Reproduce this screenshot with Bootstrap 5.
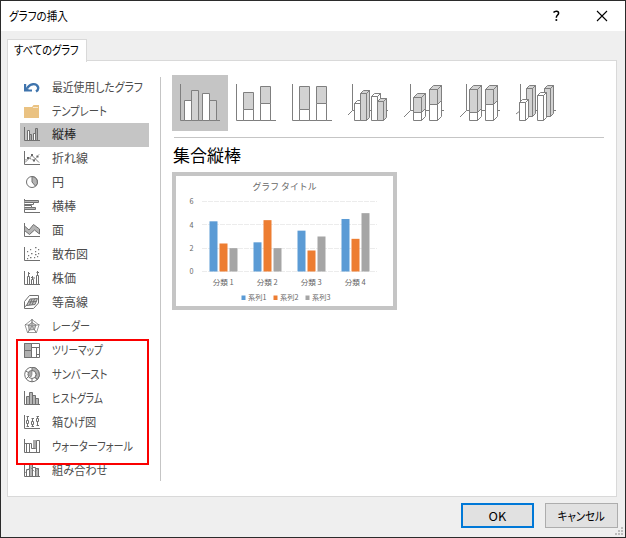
<!DOCTYPE html>
<html lang="ja">
<head>
<meta charset="utf-8">
<meta name="viewport" content="width=device-width, initial-scale=1">
<title>グラフの挿入</title>
<link rel="stylesheet" href="https://cdn.jsdelivr.net/npm/bootstrap@5.3.0/dist/css/bootstrap.min.css">
<style>
body{font-family:"Noto Sans CJK JP",sans-serif;font-size:12px;line-height:16px;color:#000;overflow:hidden}
.dialog{width:626px;height:538px;border:1px solid #2b2b2b;background:#efefef}
.titlebar{height:30px;padding:0 17px 0 8px}
.fit{display:inline-block;white-space:nowrap;transform-origin:left center;font-feature-settings:"palt"}
.winbtns{gap:35px}
.tabs{height:30px;padding:8px 0 0 6px}
.tab-on{width:80px;height:23px;border:1px solid #d9d9d9;border-bottom:0;background:#fff;padding:2px 0 0 6px;margin-bottom:-1px;z-index:1}
.panel{margin:-1px 8px 0 6px;height:437px;border:1px solid #d9d9d9;background:#fff}
.side{width:152px;padding:15px 0 0 12px}
.side .list-group-item{height:24px;width:129px;padding:0 0 0 4px;border:0;border-radius:0;color:#4c4c4c;background:none;gap:12px}
.side .list-group-item.active{background:#c5c5c5;color:#222}
.side .list-group-item svg{flex:none;margin-top:0}
.side .list-group-item .fit{margin-top:-2px}
.rule-v{width:1px;height:404px;background:#c5c5c5;margin-top:16px}
.mainpane{padding:14px 0 0 11px}
.kind{width:56px;height:56px}
.kind.sel{background:#c5c5c5}
.rule-h{height:1px;width:430px;background:#c5c5c5;margin:6px 0 0 2px}
.heading{font-size:17px;line-height:24px;margin:5px 0 0 1px;height:29px}
.preview{width:225px;height:138px;border:4px solid #c5c5c5;background:#fff}
.preview text{font-family:"Noto Sans CJK JP",sans-serif;font-size:7px;fill:#666}
.footer-row{padding:6px 7px 0 0;gap:11px}
.dlg-btn{width:73px;height:25px;padding:0;border-radius:0;font-size:12px;line-height:16px;background:#e1e1e1;border:1px solid #adadad;color:#000}
.dlg-btn.primary{border:2px solid #0078d7}
.dlg-btn .fit{transform-origin:center}
.red-box{left:16px;top:339px;width:133px;height:126px;border:2px solid #fa0000;z-index:3}
.grip{left:615px;top:527px}
</style>
<script src="https://cdn.jsdelivr.net/npm/bootstrap@5.3.0/dist/js/bootstrap.bundle.min.js"></script>
</head>
<body class="m-0">
<div class="dialog position-relative">
  <div class="titlebar d-flex align-items-center justify-content-between bg-white">
    <span class="fit" data-w="59">グラフの挿入</span>
    <div class="d-flex winbtns align-items-center">
      <svg width="9" height="12" fill="none" stroke="#000" stroke-width="1.5"><path d="M1.5 2.6C3 .8 6.600 .9 6.600 3.200C6.600 5 4.300 5.200 4.300 7.800"/><path d="M3.500 10h1.700" stroke-width="1.8"/></svg>
      <svg width="12" height="12" stroke="#000" stroke-width="1.1"><path d="M1 1l10 10M11 1L1 11"/></svg>
    </div>
  </div>
  <div class="tabs d-flex"><div class="tab-on position-relative"><span class="fit" data-w="65">すべてのグラフ</span></div></div>
  <div class="panel d-flex">
    <div class="side"><div class="list-group" id="types"></div></div>
    <div class="rule-v"></div>
    <div class="mainpane">
      <div class="d-flex" id="kinds"></div>
      <div class="rule-h"></div>
      <div class="heading"><span class="fit" data-w="68">集合縦棒</span></div>
      <div class="preview"><svg class="d-block" id="chart" width="217" height="130"></svg></div>
    </div>
  </div>
  <div class="footer-row d-flex justify-content-end">
    <button class="btn dlg-btn primary"><span class="fit" data-w="18">OK</span></button>
    <button class="btn dlg-btn"><span class="fit" data-w="47">キャンセル</span></button>
  </div>
</div>
<div class="red-box position-absolute"></div>
<svg class="grip position-absolute" width="9" height="9" fill="#bdbdbd"><path d="M6 0h2v2h-2zM3 3h2v2h-2zM6 3h2v2h-2zM0 6h2v2h-2zM3 6h2v2h-2zM6 6h2v2h-2z"/></svg>
<script>
const axis='<path d="M.5 0V13.500H16"/>';
const types=[
 ['最近使用したグラフ',91,'<path stroke="#3f74ad" stroke-width="2.400" d="M3 8.500C6 3 12.500 3 14 7C14.700 9 13.500 10.500 12 11.500"/><path stroke="none" fill="#3f74ad" d="M0 4V11.500H8V9.500H4.800L2.200 7.500V4Z"/>'],
 ['テンプレート',55,'<g stroke="none"><path fill="#eac282" d="M0 3H8L9.500 1H15V14H0Z"/><path stroke="#f8e8cd" d="M9 3.500H14"/></g>'],
 ['縦棒',24,'<path d="M.5 0V13.500H16"/><path fill="#fff" d="M3.500 13V3.500H5.500V13M9.500 13V6.500H11.500V13"/><path fill="#aaa" d="M5.500 13V7.500H7.500V13M11.500 13V1.500H13.500V13"/>'],
 ['折れ線',36,axis+'<path d="M1 11.500L8 4.500L15 11.500" stroke-width=".9"/><path d="M1 9.500L4 6.500L10 9.500L15 3.500" stroke-dasharray="2 1"/><path fill="#666" stroke="none" d="M7 3h2v2H7zM3 6h2v2H3zM9 8.500h2v2H9zM12.500 4.500h2v2h-2z"/>'],
 ['円',12,'<circle cx="8" cy="7" r="5.500"/><path fill="#b5b5b5" d="M8 7V1.500A5.500 5.500 0 0 1 11.500 11.200Z"/>'],
 ['横棒',24,axis+'<path fill="#b5b5b5" d="M.5 1.500H14.500V3.500H.5M.5 8.500H11.500V10.500H.5"/><path fill="#fff" d="M.5 3.500H9.500V5.500H.5M.5 6.500H7.500V8.500H.5"/>'],
 ['面',12,axis+'<path fill="#b5b5b5" d="M.5 3L5 7L9.500 1.500L15.500 6V11L10.500 7L5.500 11.500L.5 7.500Z"/>'],
 ['散布図',36,axis+'<path stroke="none" fill="#777" d="M3 4h1.200v1.200H3zM6 2h1.200v1.200H6zM11 0h1.500v1.200h-1.500zM14 2h1.200v1.200H14zM11 4h1.200v1.200H11zM7 6h1.500v1.200H7zM4 8h1.200v1.200H4zM11 7h1.500v1.200h-1.500zM14 6h1.200v1.200H14zM6 10h1.500v1.200H6zM10 10h1.200v1.200H10zM3 11h1.200v1.200H3zM13 9h1.200v1.200H13z"/>'],
 ['株価',24,'<path d="M.5 0V13.500H16M3.500 13V5.500H5.500V13M7.500 13V8.500H9.500V13M12.500 13V4.500H14.500V13M4.500 1V5M4 2.500H6M8.500 5V8M7 6.500H8.500M8.500 7H11M13.500 0V4M12.500 1.500H15"/>'],
 ['等高線',36,'<path d="M.5 6.500L5.500 .5H14.500V8L9.500 13.500H.5ZM.5 12L5.500 8"/><path fill="#c5c5c5" d="M2.500 10.500L6 4L13.500 3.500L11 9.500Z"/><path d="M4.500 7L12.500 6.500M8 10L10.500 4M5.500 10L8 4"/>'],
 ['レーダー',38,'<path d="M8 0V7L1 5.500M15.500 5.500L8 7M3.500 14L8 7L12.500 14M8 .5L15 6L12.500 13.500H3.500L1 6Z" stroke-width=".7"/><path fill="#c5c5c5" stroke-width=".7" d="M8 3.500L12 6L10.500 10.500L5 11L4.500 6Z"/><path d="M8 0V7L4 13M8 7L12 13M4 6L8 7L12 6" stroke-width=".6"/>'],
 ['ツリーマップ',51,'<path fill="#fff" d="M.5 .5H15.500V14.500H.5Z"/><path fill="#b0b0b0" d="M.5 .5H7.500V7.500H.5ZM.5 7.500H7.500V14.500H.5Z"/><path d="M7.500 4.500H15.500M12.500 4.500V14.500M12.500 11.500H15.500"/>'],
 ['サンバースト',56,'<circle cx="8" cy="7.500" r="7.300"/><path fill="#b0b0b0" d="M8 .3A7.300 7.300 0 0 1 13.500 12.500L11 10.300A4 4 0 0 0 8 3.500Z"/><circle cx="8" cy="7.500" r="4" fill="#fff"/><path fill="#aaa" d="M8 7.500V3.500A4 4 0 0 0 4 7.500L7 10Z" stroke-width=".6"/><path d="M4.500 5.500L1.500 4M4.500 9.500L2 12M8 11.500V15M11 10.500L13.500 13"/>'],
 ['ヒストグラム',51,axis+'<path fill="#b5b5b5" d="M2.500 13V5.500H5.500V13M5.500 13V1.500H8.500V13M8.500 13V4.500H11.500V13M11.500 13V7.500H14.500V13"/>'],
 ['箱ひげ図',44,axis+'<path d="M3.500 1V11.500M8.500 3V12M13.500 1V11M2.500 1.500H5M7.500 3.500H10M12.500 1.500H15M2.500 11.500H5M7.500 11.500H10M12.500 10.500H15"/><path fill="#fff" d="M2.500 5.500H4.500V8.500H2.500ZM7.500 6.500H9.500V9.500H7.500ZM12.500 3.500H14.500V6.500H12.500Z"/>'],
 ['ウォーターフォール',81,axis+'<path fill="#fff" d="M2.500 13V4.500H5.500V13M12.500 13V1.500H15.500V13"/><path stroke="none" fill="#a9a9a9" d="M9 1H12V10H9Z"/><path d="M5.500 4.500H7.500V9.500H11.500M.5 4.500H3"/>'],
 ['組み合わせ',55,axis+'<path fill="#b5b5b5" d="M5.500 13V.5H8.500V13M11.500 13V5.500H14.500V13"/><path fill="#fff" d="M2.500 13V6.500H5.500V13M8.500 13V4.500H11.500V13"/><path d="M1 10L6 4L11 9L15 5" stroke-width=".7" stroke-dasharray="2 1"/>']
];
document.getElementById('types').innerHTML=types.map((t,i)=>
 `<div class="list-group-item d-flex align-items-center${i===2?' active':''}"><svg width="16" height="16" fill="none" stroke="#707070">${t[2]}</svg><span class="fit" data-w="${t[1]}">${t[0]}</span></div>`).join('');

// Gallery of column chart kinds
const G='#d2d2d2',W='#fff';
const flat=(a,b,t,u,f)=>`<path fill="${f}" d="M${a} ${u}V${t}H${b}V${u}Z"/>`;
const box=(a,b,t,u,d,f)=>flat(a,b,t,u,f)+`<path fill="${f}" d="M${a} ${t}l${d} ${-d}H${b+d}l${-d} ${d}ZM${b} ${t}l${d} ${-d}V${u-d}L${b} ${u}Z"/>`;
const ax2='<path d="M8.500 9V45.500H48"/>';
const ax3=(x,y)=>`<path d="M${x} 9V35.500H48M${x} 35.500L8 ${y}"/>`;
const kinds=[
 ax2+flat(12.5,19.5,25.5,45.5,W)+flat(19.5,26.5,15.5,45.5,G)+flat(30.5,37.5,18.5,45.5,W)+flat(37.5,44.5,25.5,45.5,G),
 ax2+flat(15.5,25.5,17.5,34.5,G)+flat(15.5,25.5,34.5,45.5,W)+flat(32.5,42.5,11.5,28.5,G)+flat(32.5,42.5,28.5,45.5,W),
 ax2+flat(15.5,25.5,11.5,34.5,G)+flat(15.5,25.5,34.5,45.5,W)+flat(32.5,42.5,11.5,28.5,G)+flat(32.5,42.5,28.5,45.5,W),
 ax3(12.5,40)+box(14.5,20.5,28.5,45.5,3,W)+box(20.5,26.5,18.5,45.5,3,G)+box(31.5,37.5,21.5,45.5,3,W)+box(37.5,43.5,26.5,45.5,3,G),
 ax3(14.5,42)+box(17.5,25.5,37.5,45.5,4,W)+box(17.5,25.5,22.5,37.5,4,G)+box(33.5,41.5,29.5,45.5,4,W)+box(33.5,41.5,14.5,29.5,4,G),
 ax3(14.5,42)+box(17.5,25.5,37.5,45.5,4,W)+box(17.5,25.5,14.5,37.5,4,G)+box(33.5,41.5,29.5,45.5,4,W)+box(33.5,41.5,14.5,29.5,4,G),
 ax3(12.5,39)+box(18.5,24.5,13.5,41.5,3,G)+box(11.5,17.5,27.5,45.5,3,W)+box(36.5,42.5,13.5,41.5,3,G)+box(29.5,35.5,20.5,45.5,3,W)
];
document.getElementById('kinds').innerHTML=kinds.map((k,i)=>
 `<div class="kind${i?'':' sel'}"><svg class="d-block" width="56" height="56" fill="none" stroke="#7f7f7f">${k}</svg></div>`).join('');

// Preview chart
const cols=['#5b9bd5','#ed7d31','#a5a5a5'];
const data=[[4.3,2.4,2],[2.5,4.4,2],[3.5,1.8,3],[4.5,2.8,5]];
const label=(x,y,s,w,o='')=>`<text x="${x}" y="${y}" textLength="${w}" lengthAdjust="spacingAndGlyphs" ${o}>${s}</text>`;
let c=label(76.5,13.5,'グラフ タイトル',64,'style="font-size:9px"');
[6,4,2,0].forEach((v,i)=>{const y=25.5+i*23.3;
 c+=`<path d="M26 ${Math.floor(y)+.5}H201" stroke="#ececec" stroke-dasharray="5 1"/>`+label(13.5,y+2.7,v,4);});
data.forEach((r,i)=>{
 r.forEach((v,j)=>{c+=`<rect x="${33.5+44*i+10*j}" y="${95.5-v*11.67}" width="8" height="${v*11.67}" fill="${cols[j]}"/>`;});
 c+=label(36.700+44*i,109,'分類 '+(i+1),21);});
cols.forEach((f,j)=>{c+=`<rect x="${65.5+32*j}" y="119.500" width="4" height="4.500" fill="${f}"/>`+label(72+32*j,123.500,'系列'+(j+1),18.5);});
document.getElementById('chart').innerHTML=c;

// Condense each label to its UI width
document.querySelectorAll('.fit').forEach(e=>{e.style.transform=`scaleX(${e.dataset.w/e.offsetWidth})`;});
</script>
</body>
</html>
